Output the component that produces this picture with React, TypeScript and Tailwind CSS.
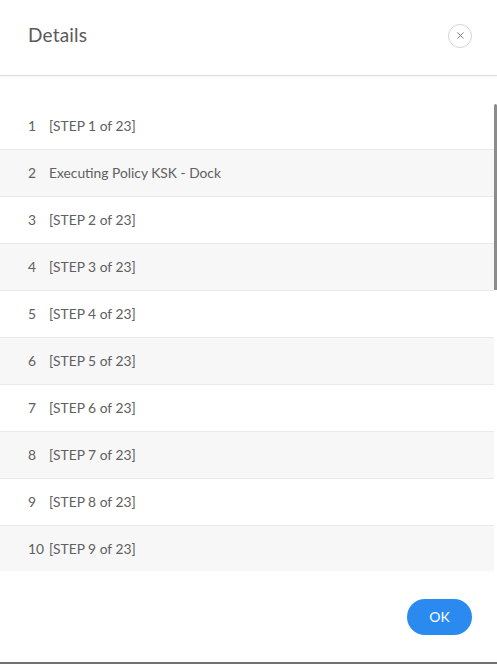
import { X } from 'lucide-react';

const steps: string[] = ['[STEP 1 of 23]', 'Executing Policy KSK - Dock'];
for (let i = 2; i <= 23; i++) steps.push(`[STEP ${i} of 23]`);

export default function App() {
  return (
    <div className="w-[497px] h-[664px] bg-white flex flex-col text-[#606060]" style={{ fontFamily: 'Lato, "Open Sans", sans-serif' }}>
      <div className="h-[76px] shrink-0 flex items-center justify-between pl-[28px] pr-[25px] pb-[4px] border-b border-[#dcdcdc] shadow-[0_1px_3px_rgba(0,0,0,0.05)]">
        <h1 className="text-[19px] font-normal text-[#5a5a5a] tracking-[0.2px]">Details</h1>
        <button className="w-[24px] h-[24px] rounded-full border border-[#d4d4d4] flex items-center justify-center bg-white">
          <X size={11} strokeWidth={2} className="text-[#6c7086]" />
        </button>
      </div>

      <div className="pt-[27px] relative">
        <div className="h-[468px] overflow-y-auto pr-[3px]">
          {steps.map((s, i) => (
            <div key={i} className={`h-[47px] flex items-center border-b border-[#e9e9e9] pl-[28px] text-[13.8px] ${i % 2 === 1 ? 'bg-[#f7f7f7]' : 'bg-white'}`}>
              <span className="min-w-[21px]">{i + 1}</span>
              <span>{s}</span>
            </div>
          ))}
        </div>
        {/* overlay scrollbar thumb */}
        <div className="absolute right-0 top-[28px] w-[3px] h-[186px] bg-[#8c8c8c] rounded-t-full" />
      </div>

      <div className="flex-1 flex items-center justify-end pr-[25px] border-b-2 border-[#707070]">
        <button className="w-[65px] h-[36px] rounded-full bg-[#2a8af0] text-white text-[14px]">OK</button>
      </div>
    </div>
  );
}
